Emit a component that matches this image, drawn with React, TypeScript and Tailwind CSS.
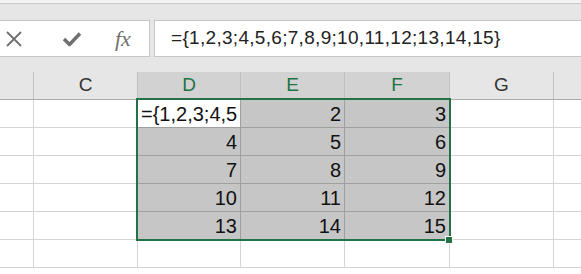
import React from "react";

const cols = [
  { key: "B", w: "w-[34px]", label: "" },
  { key: "C", w: "w-[104px]", label: "C" },
  { key: "D", w: "w-[103px]", label: "D" },
  { key: "E", w: "w-[104px]", label: "E" },
  { key: "F", w: "w-[105px]", label: "F" },
  { key: "G", w: "w-[104px]", label: "G" },
  { key: "H", w: "w-[60px]", label: "" },
];

const data: (string | null)[][] = [
  ["={1,2,3;4,5", "2", "3"],
  ["4", "5", "6"],
  ["7", "8", "9"],
  ["10", "11", "12"],
  ["13", "14", "15"],
  [null, null, null],
];

const font = { fontFamily: '"Liberation Sans", Arial, sans-serif' };

export default function App() {
  return (
    <div className="w-[581px] h-[274px] overflow-hidden bg-white relative" style={font}>
      {/* ribbon edge */}
      <div className="h-[4px] bg-[#f3f3f3] border-b border-[#c8c8c8]" />

      {/* formula bar */}
      <div className="bg-[#e6e6e6] pt-[16px] pb-[15px] flex">
        <div className="w-[150px] h-[37px] bg-white border border-l-0 border-[#c6c6c6] flex items-center">
          <svg className="ml-[5px]" width="18" height="18" viewBox="0 0 18 18">
            <path d="M2 2 L16 16 M16 2 L2 16" stroke="#6f6f6f" strokeWidth="1.8" fill="none" />
          </svg>
          <svg className="ml-[39px]" width="20" height="18" viewBox="0 0 20 18">
            <path d="M2 9 L7.5 14.5 L18 3.5" stroke="#6f6f6f" strokeWidth="3.4" fill="none" strokeLinejoin="round" />
          </svg>
          <span
            className="ml-[33px] text-[22px] italic text-[#6f6f6f] leading-none"
            style={{ fontFamily: '"Liberation Serif", "Times New Roman", serif' }}
          >
            fx
          </span>
        </div>
        <div className="ml-[4px] flex-1 h-[37px] bg-white border border-r-0 border-[#c6c6c6] flex items-center pl-[16px]">
          <span className="text-[19px] text-[#222] tracking-[0.3px]">={"{"}1,2,3;4,5,6;7,8,9;10,11,12;13,14,15{"}"}</span>
        </div>
      </div>

      {/* column headers */}
      <div className="flex h-[28px] bg-[#e6e6e6] border-b border-[#ababab]">
        {cols.map((c, i) => {
          const sel = i >= 2 && i <= 4;
          return (
            <div
              key={c.key}
              className={`${c.w} shrink-0 border-r border-[#c0c0c0] flex items-center justify-center text-[19px] ${
                sel ? "bg-[#d2d2d2] text-[#217346] border-[#b5b5b5]" : "text-[#333]"
              }`}
            >
              {c.label}
            </div>
          );
        })}
      </div>

      {/* grid */}
      <div className="relative">
        {data.map((row, r) => (
          <div key={r} className="flex h-[28px]">
            {cols.map((c, i) => {
              const di = i - 2;
              const inSel = r < 5 && di >= 0 && di <= 2;
              const active = r === 0 && di === 0;
              const val = di >= 0 && di <= 2 ? row[di] : null;
              return (
                <div
                  key={c.key}
                  className={`${c.w} shrink-0 border-r border-b flex items-end text-[20px] text-[#111] leading-none pb-[3px] overflow-hidden whitespace-nowrap ${
                    active
                      ? "bg-white border-[#a0a0a0] justify-start pl-[3px]"
                      : inSel
                      ? "bg-[#c6c6c6] border-[#a0a0a0] justify-end pr-[3px]"
                      : "border-[#d4d4d4]"
                  }`}
                >
                  {val}
                </div>
              );
            })}
          </div>
        ))}

        {/* selection outline */}
        <div className="absolute left-[136px] top-[-2px] w-[315px] h-[143px] border-2 border-[#217346] pointer-events-none" />
        {/* fill handle */}
        <div className="absolute left-[445px] top-[136px] w-[8px] h-[8px] bg-[#217346] border border-white" />
      </div>
    </div>
  );
}
